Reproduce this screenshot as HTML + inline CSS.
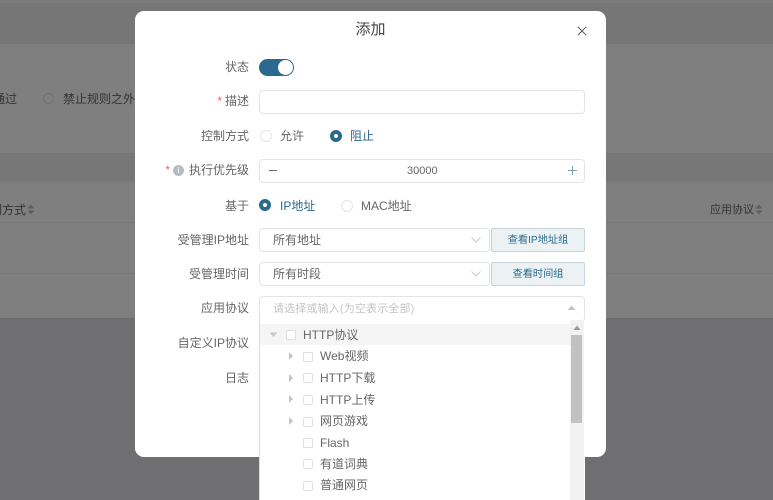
<!DOCTYPE html>
<html lang="zh">
<head>
<meta charset="utf-8">
<style>
html,body{margin:0;padding:0;}
body{width:773px;height:500px;overflow:hidden;position:relative;background:#6f6f72;font-family:"Liberation Sans","Noto Sans CJK SC",sans-serif;font-size:12px;color:#666;}
#w{position:absolute;left:0;top:0;width:773px;height:500px;overflow:hidden;filter:blur(.35px);}
.a{position:absolute;}
.t{position:absolute;white-space:nowrap;line-height:16px;}
.l{position:absolute;right:524px;white-space:nowrap;line-height:16px;color:#666;font-size:12px;text-align:right;}
.band{position:absolute;left:0;width:773px;}
.box{position:absolute;box-sizing:border-box;background:#fff;border:1px solid #e3e4e6;border-radius:4px;}
.btn{position:absolute;box-sizing:border-box;background:#ecf1f4;border:1px solid #c9d3da;border-radius:2px;color:#2a6a8e;font-size:10.2px;text-align:center;line-height:24px;}
.r{position:absolute;box-sizing:border-box;width:12px;height:12px;border-radius:50%;border:1px solid #e3e4e6;background:#fff;}
.rc{position:absolute;box-sizing:border-box;width:12px;height:12px;border-radius:50%;border:4px solid #2a6a8e;background:#fff;}
.cb{position:absolute;box-sizing:border-box;width:10px;height:10px;border:1px solid #e0e0e0;border-radius:2px;background:#fff;}
.tri{position:absolute;width:0;height:0;border-top:4px solid transparent;border-bottom:4px solid transparent;border-left:4px solid #c4c4c4;}
.i{position:absolute;white-space:nowrap;line-height:16px;color:#666;font-size:12px;}
</style>
</head>
<body>
<div id="w">
<div class="band" style="top:318px;height:182px;background:#6f6f72"></div>
<div class="band" style="top:0;height:3px;background:#7c7c7c"></div>
<div class="band" style="top:3px;height:41px;background:#767676"></div>
<div class="band" style="top:44px;height:109px;background:#7f7f7f"></div>
<div class="band" style="top:153px;height:29px;background:#777777"></div>
<div class="band" style="top:182px;height:136px;background:#7f7f7f"></div>
<div class="band" style="top:222px;height:1px;background:#777"></div>
<div class="band" style="top:273px;height:1px;background:#777"></div>

<div class="t" style="left:-7px;top:91px;color:#333">通过</div>
<div class="a" style="left:43px;top:93px;width:11px;height:11px;box-sizing:border-box;border:1px solid #727272;border-radius:50%"></div>
<div class="t" style="left:63px;top:91px;color:#333">禁止规则之外</div>
<div class="t" style="left:-10px;top:202px;color:#333">制方式</div>
<svg class="a" style="left:27px;top:204px" width="8" height="11"><path d="M4 0.5L7.5 4.5H0.5ZM4 10.5L7.5 6.5H0.5Z" fill="#5e5e5e"/></svg>
<div class="t" style="left:710px;top:202px;color:#333;font-size:11px">应用协议</div>
<svg class="a" style="left:755px;top:204px" width="8" height="11"><path d="M4 0.5L7.5 4.5H0.5ZM4 10.5L7.5 6.5H0.5Z" fill="#5e5e5e"/></svg>

<div class="a" style="left:135px;top:11px;width:471px;height:446px;background:#fff;border-radius:9px"></div>

<div class="t" style="left:355.5px;top:21px;font-size:15px;line-height:18px;color:#444">添加</div>
<svg class="a" style="left:577px;top:26px" width="10" height="10"><path d="M0.8 0.8L9.2 9.2M9.2 0.8L0.8 9.2" stroke="#555" stroke-width="1" fill="none"/></svg>

<div class="l" style="top:59px">状态</div>
<div class="a" style="left:259px;top:59px;width:35px;height:17px;border-radius:9px;background:#2a6a8e"></div>
<div class="a" style="left:278px;top:60px;width:15px;height:15px;border-radius:50%;background:#fff"></div>

<div class="l" style="top:93px"><span style="color:#e66;margin-right:3px">*</span>描述</div>
<div class="box" style="left:259px;top:90px;width:326px;height:24px"></div>

<div class="l" style="top:128px">控制方式</div>
<div class="r" style="left:260px;top:130px"></div>
<div class="t" style="left:280px;top:128px">允许</div>
<div class="rc" style="left:330px;top:130px"></div>
<div class="t" style="left:350px;top:128px;color:#2a6a8e">阻止</div>

<div class="l" style="top:162px"><span style="color:#e66;margin-right:3px">*</span><span style="display:inline-block;width:11px;height:11px;border-radius:50%;background:#b4bcc2;color:#fff;font-size:8px;line-height:11px;text-align:center;vertical-align:1px;margin-right:5px">i</span>执行优先级</div>
<div class="box" style="left:259px;top:159px;width:326px;height:24px"></div>
<div class="a" style="left:269px;top:170px;width:8px;height:1px;background:#666"></div>
<div class="t" style="left:407px;top:163px;font-size:11px">30000</div>
<svg class="a" style="left:568px;top:166px" width="9" height="9"><path d="M4.5 0V9M0 4.5H9" stroke="#7d9db0" stroke-width="1"/></svg>

<div class="l" style="top:198px">基于</div>
<div class="rc" style="left:259px;top:199px"></div>
<div class="t" style="left:280px;top:198px;color:#2a6a8e">IP地址</div>
<div class="r" style="left:341px;top:200px"></div>
<div class="t" style="left:361px;top:198px">MAC地址</div>

<div class="l" style="top:232px">受管理IP地址</div>
<div class="box" style="left:259px;top:228px;width:231px;height:24px"></div>
<div class="t" style="left:273px;top:232px">所有地址</div>
<svg class="a" style="left:471px;top:237px" width="10" height="6"><path d="M0.5 0.5L5 5L9.5 0.5" stroke="#c8c8c8" fill="none"/></svg>
<div class="btn" style="left:491px;top:228px;width:94px;height:24px">查看IP地址组</div>

<div class="l" style="top:266px">受管理时间</div>
<div class="box" style="left:259px;top:262px;width:231px;height:24px"></div>
<div class="t" style="left:273px;top:266px">所有时段</div>
<svg class="a" style="left:471px;top:271px" width="10" height="6"><path d="M0.5 0.5L5 5L9.5 0.5" stroke="#c8c8c8" fill="none"/></svg>
<div class="btn" style="left:491px;top:262px;width:94px;height:24px">查看时间组</div>

<div class="l" style="top:300px">应用协议</div>
<div class="box" style="left:259px;top:296px;width:326px;height:26px"></div>
<div class="t" style="left:273px;top:301px;color:#c4c4c4;font-size:11px;letter-spacing:.15px">请选择或输入(为空表示全部)</div>
<svg class="a" style="left:567px;top:305px" width="9" height="6"><path d="M4.5 0.5L8.5 5H0.5Z" fill="#c4c4c4"/></svg>

<div class="l" style="top:335px">自定义IP协议</div>
<div class="l" style="top:370px">日志</div>

<div class="a" style="left:259px;top:320px;width:326px;height:180px;background:#fff;border-left:1px solid #ddd;box-sizing:border-box"></div>
<div class="a" style="left:260px;top:324px;width:311px;height:21px;background:#f5f5f5"></div>
<div class="a" style="left:570px;top:320px;width:14px;height:180px;background:#f2f2f3"></div>
<div class="a" style="left:571px;top:335px;width:11px;height:88px;background:#c1c1c1"></div>
<svg class="a" style="left:573px;top:325px" width="8" height="6"><path d="M4 0.5L7.5 5H0.5Z" fill="#9a9a9a"/></svg>

<svg class="a" style="left:269px;top:332px" width="9" height="6"><path d="M0.5 0.5H8.5L4.5 5Z" fill="#c8c8c8"/></svg>
<div class="cb" style="left:286px;top:330px"></div>
<div class="i" style="left:303px;top:327px">HTTP协议</div>

<div class="tri" style="left:289px;top:352px"></div><div class="cb" style="left:303px;top:352px"></div><div class="i" style="left:320px;top:348px">Web视频</div>
<div class="tri" style="left:289px;top:374px"></div><div class="cb" style="left:303px;top:373px"></div><div class="i" style="left:320px;top:370px">HTTP下载</div>
<div class="tri" style="left:289px;top:395px"></div><div class="cb" style="left:303px;top:395px"></div><div class="i" style="left:320px;top:392px">HTTP上传</div>
<div class="tri" style="left:289px;top:417px"></div><div class="cb" style="left:303px;top:417px"></div><div class="i" style="left:320px;top:413px">网页游戏</div>
<div class="cb" style="left:303px;top:438px"></div><div class="i" style="left:320px;top:435px">Flash</div>
<div class="cb" style="left:303px;top:459px"></div><div class="i" style="left:320px;top:456px">有道词典</div>
<div class="cb" style="left:303px;top:481px"></div><div class="i" style="left:320px;top:477px">普通网页</div>
</div>
</body>
</html>
